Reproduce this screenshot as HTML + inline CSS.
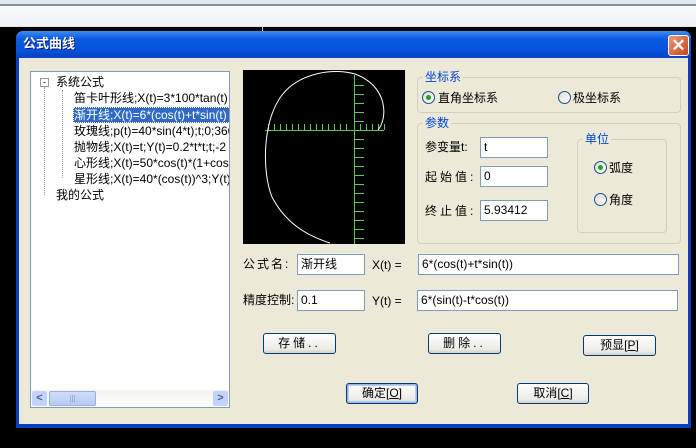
<!DOCTYPE html>
<html><head><meta charset="utf-8"><style>
*{margin:0;padding:0;box-sizing:border-box}
body{width:696px;height:448px;background:#000;position:relative;overflow:hidden;font-family:"Liberation Sans","Noto Sans CJK SC",sans-serif;font-size:12px;color:#000}
.a{position:absolute}
.t{position:absolute;white-space:nowrap;line-height:14px}
.inp{position:absolute;background:#fff;border:1px solid #7f9db9;padding:2px 3px;line-height:14px;white-space:nowrap;overflow:hidden}
.btn{position:absolute;border:1px solid #003c74;border-radius:3px;background:linear-gradient(#fff,#ecebe6 80%,#d6d0c5);text-align:center;line-height:19px}
.grp{position:absolute;border:1px solid #d0d0bf;border-radius:4px}
.gl{position:absolute;background:#ece9d8;color:#0046d5;padding:0 2px;line-height:14px}
.rad{position:absolute;width:13px;height:13px;border-radius:50%;border:1px solid #1c5180;background:linear-gradient(135deg,#dcdcd6,#fff)}
.rad.on::after{content:"";position:absolute;left:3px;top:3px;width:5px;height:5px;border-radius:50%;background:#21a121}
</style></head><body>
<div class="a" style="left:0;top:0;width:696px;height:27px;background:#e3e8ef"></div>
<div class="a" style="left:0;top:4px;width:696px;height:2px;background:#8593a8"></div>
<div class="a" style="left:0;top:6px;width:696px;height:20px;background:linear-gradient(#fafbfd,#eef1f5)"></div>
<div class="a" style="left:262px;top:26px;width:1px;height:6px;background:#ccc"></div>
<!-- dialog -->
<div class="a" style="left:16px;top:31px;width:675px;height:397px;background:#0a3fbe;border-radius:7px 7px 0 0"></div>
<div class="a" style="left:16px;top:31px;width:675px;height:27px;background:linear-gradient(#3d8cf5,#0a5ae0 30%,#0552dd 70%,#0841c0);border-radius:7px 7px 0 0"></div>
<div class="t" style="left:23px;top:37px;color:#fff;font-weight:bold;font-size:13px;text-shadow:1px 1px #0a1e6e">公式曲线</div>
<div class="a" style="left:668px;top:35px;width:21px;height:21px;border:1px solid #fff;border-radius:3px;background:linear-gradient(135deg,#e89a7a,#c8441c);color:#fff;font-size:17px;line-height:19px;text-align:center;font-weight:bold">✕</div>
<div class="a" style="left:19px;top:58px;width:669px;height:366px;background:#ece9d8"></div>
<!-- tree -->
<div class="a" style="left:30px;top:71px;width:200px;height:337px;background:#fff;border:1px solid #7f9db9;overflow:hidden">
 <div class="a" style="left:9px;top:6px;width:9px;height:9px;border:1px solid #919b9c;font-size:9px;line-height:6px;text-align:center;color:#000">-</div>
 <div class="a" style="left:13px;top:15px;width:1px;height:108px;border-left:1px dotted #a0a0a0"></div>
 <div class="a" style="left:31px;top:18px;width:1px;height:88px;border-left:1px dotted #a0a0a0"></div>
 <div class="t" style="left:25px;top:3px">系统公式</div>
 <div class="t" style="left:43px;top:19px">笛卡叶形线;X(t)=3*100*tan(t)</div>
 <div class="a" style="left:42px;top:35px;width:160px;height:16px;background:#316ac5;border:1px dotted #fff"></div>
 <div class="t" style="left:43px;top:36px;color:#fff">渐开线;X(t)=6*(cos(t)+t*sin(t)</div>
 <div class="t" style="left:43px;top:52px">玫瑰线;p(t)=40*sin(4*t);t;0;360</div>
 <div class="t" style="left:43px;top:68px">抛物线;X(t)=t;Y(t)=0.2*t*t;t;-2</div>
 <div class="t" style="left:43px;top:84px">心形线;X(t)=50*cos(t)*(1+cos(t</div>
 <div class="t" style="left:43px;top:100px">星形线;X(t)=40*(cos(t))^3;Y(t)</div>
 <div class="t" style="left:25px;top:116px">我的公式</div>
 <div class="a" style="left:0;top:318px;width:198px;height:17px;background:linear-gradient(#f3f3ee,#fefefe)"></div>
 <div class="a" style="left:1px;top:319px;width:15px;height:15px;background:#c1d3fb;border-radius:2px;color:#4d6185;font-size:11px;line-height:15px;text-align:center;font-weight:bold">&lt;</div>
 <div class="a" style="left:18px;top:319px;width:47px;height:15px;background:linear-gradient(#cfdcfa,#b8cbf6);border:1px solid #9bb0e0;border-radius:2px;color:#8aa0d0;font-size:8px;line-height:13px;text-align:center">|||</div>
 <div class="a" style="left:182px;top:319px;width:15px;height:15px;background:#c1d3fb;border-radius:2px;color:#4d6185;font-size:11px;line-height:15px;text-align:center;font-weight:bold">&gt;</div>
</div>
<!-- canvas -->
<svg class="a" style="left:243px;top:70px" width="162" height="174" viewBox="243 70 162 174">
<rect x="243" y="70" width="162" height="174" fill="#000"/>
<g stroke="#5fc85f" stroke-width="1" fill="none">
<line x1="265" y1="130.5" x2="384" y2="130.5"/>
<line x1="354.5" y1="75" x2="354.5" y2="244"/>
<path d="M268.5 130v-6M274.5 130v-6M280.5 130v-6M286.5 130v-6M292.5 130v-6M298.5 130v-6M304.5 130v-6M310.5 130v-6M316.5 130v-6M322.5 130v-6M328.5 130v-6M334.5 130v-6M340.5 130v-6M346.5 130v-6M360.5 130v-6M366.5 130v-6M372.5 130v-6M378.5 130v-6M384.5 130v-6"/>
<path d="M355 85.5h9M355 94.5h9M355 103.5h9M355 112.5h9M355 121.5h9M355 139.5h9M355 148.5h9M355 157.5h9M355 166.5h9M355 175.5h9M355 184.5h9M355 193.5h9M355 202.5h9M355 211.5h9M355 220.5h9M355 229.5h9M355 238.5h9"/>
</g>
<path d="M378,130 C388,118 388,86 355,74 C335,68 300,72 282,95 C262,122 262,172 272,197 C285,222 305,235 330,243" stroke="#fff" stroke-width="1" fill="none"/>
</svg>
<!-- 坐标系 -->
<div class="grp" style="left:417px;top:77px;width:264px;height:36px"></div>
<div class="gl" style="left:423px;top:70px">坐标系</div>
<div class="rad on" style="left:422px;top:91px"></div>
<div class="t" style="left:438px;top:91px">直角坐标系</div>
<div class="rad" style="left:558px;top:91px"></div>
<div class="t" style="left:573px;top:91px">极坐标系</div>
<!-- 参数 -->
<div class="grp" style="left:417px;top:123px;width:264px;height:121px"></div>
<div class="gl" style="left:423px;top:116px">参数</div>
<div class="t" style="left:425px;top:140px">参变量t:</div>
<div class="inp" style="left:480px;top:137px;width:68px;height:21px">t</div>
<div class="t" style="left:425px;top:170px;letter-spacing:3px">起始值:</div>
<div class="inp" style="left:480px;top:166px;width:68px;height:21px">0</div>
<div class="t" style="left:425px;top:204px;letter-spacing:3px">终止值:</div>
<div class="inp" style="left:480px;top:200px;width:68px;height:21px">5.93412</div>
<div class="grp" style="left:577px;top:139px;width:90px;height:94px"></div>
<div class="gl" style="left:583px;top:132px">单位</div>
<div class="rad on" style="left:594px;top:161px"></div>
<div class="t" style="left:609px;top:161px">弧度</div>
<div class="rad" style="left:594px;top:193px"></div>
<div class="t" style="left:609px;top:193px">角度</div>
<!-- formula -->
<div class="t" style="left:243px;top:257px;letter-spacing:2px">公式名:</div>
<div class="inp" style="left:297px;top:254px;width:68px;height:21px">渐开线</div>
<div class="t" style="left:372px;top:258px">X(t) =</div>
<div class="inp" style="left:418px;top:254px;width:261px;height:21px">6*(cos(t)+t*sin(t))</div>
<div class="t" style="left:243px;top:293px">精度控制:</div>
<div class="inp" style="left:297px;top:290px;width:68px;height:21px">0.1</div>
<div class="t" style="left:372px;top:294px">Y(t) =</div>
<div class="inp" style="left:417px;top:290px;width:261px;height:21px">6*(sin(t)-t*cos(t))</div>
<!-- buttons -->
<div class="btn" style="left:263px;top:333px;width:73px;height:21px;letter-spacing:3px">存储..</div>
<div class="btn" style="left:428px;top:333px;width:73px;height:21px;letter-spacing:3px">删除..</div>
<div class="btn" style="left:583px;top:335px;width:73px;height:21px">预显[<u>P</u>]</div>
<div class="btn" style="left:346px;top:383px;width:72px;height:21px;box-shadow:inset 0 0 0 1px #9ab4ec,inset 0 0 0 2px #bccef5">确定[<u>O</u>]</div>
<div class="btn" style="left:517px;top:383px;width:72px;height:21px">取消[<u>C</u>]</div>
</body></html>
